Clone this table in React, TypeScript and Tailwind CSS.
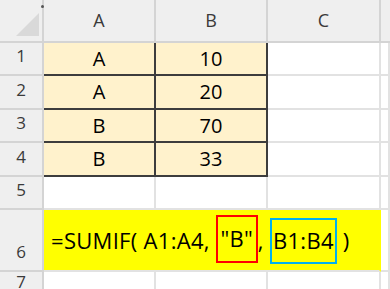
const COLS = ["A", "B", "C"];

const DATA = [
  ["A", "10"],
  ["A", "20"],
  ["B", "70"],
  ["B", "33"],
];

const head = "flex items-center justify-center border-r-2 border-b-2 border-[#d4d4d4] bg-[#efefef] text-[18px] text-[#3a3a3a]";
const rowHead = "flex items-end justify-center pb-[6px] border-r-2 border-b-2 border-[#d4d4d4] bg-[#efefef] text-[17px] text-[#3a3a3a]";
const grid = "border-r-2 border-b-2 border-[#e2e2e2] bg-white";
const data = "flex items-center justify-center border-r-2 border-b-2 border-[#3d3d3d] bg-[#fff2cc] text-[20px] text-black";

export default function App() {
  return (
    <div className="h-[289px] w-[390px] overflow-hidden bg-white font-['Open_Sans',sans-serif]">
      <div className="grid grid-cols-[44px_112px_112px_113px_1fr] grid-rows-[43px_33px_34px_33px_34px_33px_62px_30px]">
        <div className="relative border-r-2 border-b-2 border-[#d4d4d4] bg-[#efefef]">
          <svg className="absolute left-0 top-0" width="44" height="43" viewBox="0 0 44 43">
            <polygon points="39,13 39,36 16,36" fill="#d9d9d9" />
          </svg>
          <span className="absolute right-[-2px] top-[5px] h-[3px] w-[3px] rounded-full bg-[#555]" />
        </div>
        {COLS.map((c) => (
          <div key={c} className={head}>
            {c}
          </div>
        ))}
        <div className="border-b-2 border-[#d4d4d4] bg-[#efefef]" />

        {DATA.map(([a, b], i) => (
          <div key={i} className="contents">
            <div className={rowHead}>{i + 1}</div>
            <div className={data}>{a}</div>
            <div className={data}>{b}</div>
            <div className={grid} />
            <div className={grid} />
          </div>
        ))}

        <div className={rowHead}>5</div>
        <div className={grid} />
        <div className={grid} />
        <div className={grid} />
        <div className={grid} />

        <div className={rowHead}>6</div>
        <div className="col-span-3 flex items-center border-r-2 border-b-2 border-r-[#ffff00] border-b-[#e2e2e2] bg-[#ffff00] pl-[7px] text-[22px] tracking-[0.3px] text-black whitespace-pre">
          <span>=SUMIF( A1:A4, </span>
          <span className="mb-[3px] flex h-[48px] w-[42px] items-center justify-center border-2 border-[#ff0000]">"B"</span>
          <span>, </span>
          <span className="mt-[1px] flex h-[46px] w-[67px] items-center justify-center border-2 border-[#00b0f0]">B1:B4</span>
          <span> )</span>
        </div>
        <div className={grid} />

        <div className={rowHead}>7</div>
        <div className={grid} />
        <div className={grid} />
        <div className={grid} />
        <div className={grid} />
      </div>
    </div>
  );
}
